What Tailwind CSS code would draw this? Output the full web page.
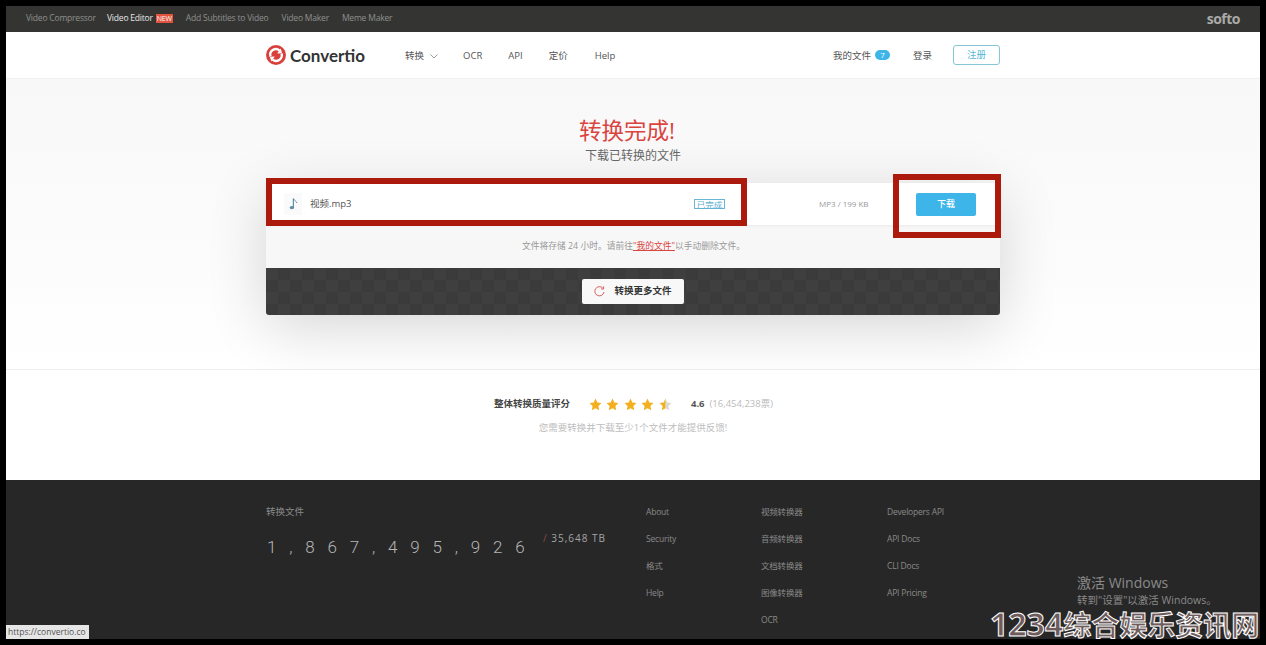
<!DOCTYPE html>
<html lang="zh">
<head>
<meta charset="utf-8">
<script src="https://cdn.jsdelivr.net/npm/@tailwindcss/browser@4"></script>
<title>Convertio</title>
</head>
<body class="bg-black">
<div class="relative w-[1266px] h-[645px] overflow-hidden bg-black pt-[6px] pl-[6px] pr-[6px] font-['Open_Sans','Noto_Sans_CJK_SC',sans-serif]">
  <div class="flex flex-col w-[1254px] h-[633px]">
    <!-- softo bar -->
    <div class="flex items-center justify-between h-[26px] shrink-0 bg-[#343533] pl-[20px] pr-[20px] pb-[2px] text-[8.500px] tracking-[-0.200px] text-[#8f8f8d]">
      <div class="flex items-center">
        <span class="w-[81px]">Video Compressor</span>
        <span class="text-[#e6e6e6]">Video Editor</span>
        <span class="ml-[3px] bg-[#e2543d] text-white text-[7px] leading-[9px] px-[1px]">NEW</span>
        <span class="ml-[13px]">Add Subtitles to Video</span>
        <span class="ml-[13px]">Video Maker</span>
        <span class="ml-[13px]">Meme Maker</span>
      </div>
      <span class="text-[14px] font-bold text-[#a9a9a7] tracking-[-0.5px]">softo</span>
    </div>
    <!-- header -->
    <div class="h-[47px] shrink-0 bg-white border-b border-[#f0f0f0]">
      <div class="w-[734px] mx-auto h-full flex items-center justify-between text-[9.500px] text-[#555]">
        <div class="flex items-center">
          <svg class="w-[20px] h-[20px]" viewBox="0 0 20 20">
            <circle cx="10" cy="10" r="10" fill="#d8403c"/>
            <path d="M4.500 11.500A5.600 5.600 0 0 1 13.600 5.600" fill="none" stroke="#fff" stroke-width="2.400"/>
            <path d="M15.500 8.500A5.600 5.600 0 0 1 6.400 14.400" fill="none" stroke="#fff" stroke-width="2.400"/>
            <path d="M11.200 8.400 16 8.200 14.800 3.600Z M8.800 11.600 4 11.800 5.200 16.400Z" fill="#fff"/>
          </svg>
          <span class="ml-[4px] w-[115px] text-[17px] leading-none font-bold text-[#333] font-['Lato',sans-serif]">Convertio</span>
          <span class="pt-[2px]">转换</span>
          <svg class="ml-[6px] mt-[2px] w-[8px] h-[5px]" viewBox="0 0 8 5"><path d="M.5.5 4 4 7.500.5" fill="none" stroke="#999"/></svg>
          <span class="ml-[25px] pt-[2px]">OCR</span>
          <span class="ml-[26px] pt-[2px]">API</span>
          <span class="ml-[26px] pt-[2px]">定价</span>
          <span class="ml-[27px] pt-[2px]">Help</span>
        </div>
        <div class="flex items-center">
          <span class="pt-[2px]">我的文件</span>
          <span class="ml-[4px] w-[15px] h-[10px] rounded-full bg-[#3db5e8] text-white text-[8px] leading-[10px] text-center">7</span>
          <span class="ml-[23px] pt-[2px]">登录</span>
          <span class="ml-[21px] w-[47px] h-[20px] flex items-center justify-center rounded-[3px] border border-[#86c6d6] text-[#5bb8d6]">注册</span>
        </div>
      </div>
    </div>
    <!-- main -->
    <div class="h-[291px] shrink-0 bg-gradient-to-b from-[#f8f8f8] via-[#fbfbfb] to-white pt-[40px] border-b border-[#eeeeee]">
      <div class="h-[23px] leading-[23px] text-center text-[22.500px] text-[#d9443f] pr-[12px]">转换完成!</div>
      <div class="mt-[5px] h-[18px] leading-[18px] text-center text-[12px] text-[#666]">下载已转换的文件</div>
      <div class="mt-[18px] w-[734px] mx-auto rounded-b-[3px] shadow-[0_12px_60px_rgba(0,0,0,0.16)]">
        <div class="h-[42px] bg-white flex items-center shadow-[0_1px_3px_rgba(0,0,0,0.06)] relative">
          <div class="ml-[18px] w-[18px] h-[22px] bg-[#fafafa] flex items-center justify-center">
            <svg class="w-[9px] h-[12px]" viewBox="0 0 9 12"><path d="M4.400 0.500V9" stroke="#5f8fa8" stroke-width="1.200"/><ellipse cx="2.900" cy="9.600" rx="2.300" ry="1.700" fill="#5f8fa8"/><path d="M4.600 .8C5.200 2.600 7.400 3 8 5" stroke="#5f8fa8" fill="none"/></svg>
          </div>
          <span class="ml-[8px] w-[42px] text-[9.500px] text-[#555]">视频.mp3</span>
          <span class="ml-[342px] w-[31px] h-[10px] leading-[9px] text-center border border-[#68b7d4] text-[8.500px] text-[#58add0]">已完成</span>
          <span class="ml-[94px] w-[50px] whitespace-nowrap text-[8px] text-[#999]">MP3 / 199 KB</span>
          <span class="ml-[47px] w-[60px] h-[23px] flex items-center justify-center rounded-[2px] bg-[#3db5e8] text-white text-[9px] font-medium">下载</span>
        </div>
        <div class="h-[43px] bg-[#f7f7f7] flex items-center justify-center text-[8.750px] text-[#999] pl-[1px]">
          <span>文件将存储 24 小时。请前往<span class="text-[#d9443f] underline">"我的文件"</span>以手动删除文件。</span>
        </div>
        <div class="h-[47px] rounded-b-[3px] flex items-center justify-center bg-[#3c3c3c] bg-[repeating-conic-gradient(#3b3b3b_0_25%,#3f3f3f_0_50%)] bg-[length:24px_24px]">
          <span class="w-[102px] h-[25px] rounded-[2px] bg-[#f8f8f8] flex items-center justify-center text-[9.500px] font-semibold text-[#333]">
            <svg class="w-[11px] h-[11px] mr-[9px]" viewBox="0 0 11 11"><path d="M8.900 2.200A4.600 4.600 0 1 0 10 6" fill="none" stroke="#d9605c" stroke-width="1"/><path d="M9.600 .4V3H7" fill="none" stroke="#d9605c" stroke-width="1"/></svg>
            转换更多文件
          </span>
        </div>
      </div>
    </div>
    <!-- rating -->
    <div class="h-[110px] shrink-0 bg-white pt-[25px]">
      <div class="flex items-center justify-center h-[18px] text-[9.500px] pl-[1px]">
        <span class="font-bold text-[#444]">整体转换质量评分</span>
        <div class="ml-[19px] flex items-center gap-[4.500px]">
          <svg class="w-[13px] h-[13px]" viewBox="0 0 24 24"><path fill="#f2b01e" d="M12 1l3.400 7.200 7.600 1-5.600 5.400 1.400 7.900L12 18.700 5.200 22.500l1.400-7.900L1 9.200l7.600-1z"/></svg>
          <svg class="w-[13px] h-[13px]" viewBox="0 0 24 24"><path fill="#f2b01e" d="M12 1l3.400 7.200 7.600 1-5.600 5.400 1.400 7.900L12 18.700 5.200 22.500l1.400-7.900L1 9.200l7.600-1z"/></svg>
          <svg class="w-[13px] h-[13px]" viewBox="0 0 24 24"><path fill="#f2b01e" d="M12 1l3.400 7.200 7.600 1-5.600 5.400 1.400 7.900L12 18.700 5.200 22.500l1.400-7.900L1 9.200l7.600-1z"/></svg>
          <svg class="w-[13px] h-[13px]" viewBox="0 0 24 24"><path fill="#f2b01e" d="M12 1l3.400 7.200 7.600 1-5.600 5.400 1.400 7.900L12 18.700 5.200 22.500l1.400-7.900L1 9.200l7.600-1z"/></svg>
          <svg class="w-[13px] h-[13px]" viewBox="0 0 24 24"><path fill="#d9d9d9" d="M12 1l3.400 7.200 7.600 1-5.600 5.400 1.400 7.900L12 18.700z"/><path fill="#f2b01e" d="M12 1v17.700L5.200 22.500l1.400-7.900L1 9.200l7.600-1z"/></svg>
        </div>
        <span class="ml-[19px] font-bold text-[#555]">4.6</span>
        <span class="ml-[5px] text-[#bbb]">(16,454,238票)</span>
      </div>
      <div class="mt-[8px] text-center text-[9.500px] text-[#bdbdbd]">您需要转换并下载至少1个文件才能提供反馈!</div>
    </div>
    <!-- footer -->
    <div class="flex-1 bg-[#272727] text-[8.500px] tracking-[-0.200px] text-[#8a8a8a]">
      <div class="w-[734px] mx-auto flex pt-[26px]">
        <div class="w-[380px] tracking-normal">
          <div class="text-[9.500px] leading-[13px] -mt-[1px]">转换文件</div>
          <div class="flex mt-[13px]">
            <span class="mt-[5px] text-[17px] leading-[22px] tracking-[12.800px] text-[#b5b5b5] font-light font-['Roboto',sans-serif] w-[277px] pl-[1px] whitespace-nowrap">1,867,495,926</span>
            <span class="text-[10px] leading-[14px] tracking-[1px] text-[#a5a5a5]"><span class="text-[#8c4a4a]">/</span> 35,648 TB</span>
          </div>
        </div>
        <div class="w-[115px] flex flex-col gap-[15px] leading-[12px]">
          <span>About</span><span>Security</span><span>格式</span><span>Help</span>
        </div>
        <div class="w-[126px] flex flex-col gap-[15px] leading-[12px]">
          <span>视频转换器</span><span>音频转换器</span><span>文档转换器</span><span>图像转换器</span><span>OCR</span>
        </div>
        <div class="flex flex-col gap-[15px] leading-[12px]">
          <span>Developers API</span><span>API Docs</span><span>CLI Docs</span><span>API Pricing</span>
        </div>
      </div>
    </div>
  </div>

  <!-- annotation boxes -->
  <div class="absolute left-[266px] top-[178px] w-[481px] h-[48px] border-[6px] border-[#ab1a0d]"></div>
  <div class="absolute left-[893px] top-[174px] w-[108px] h-[64px] border-[6px] border-[#ab1a0d]"></div>

  <!-- browser status tooltip -->
  <div class="absolute left-[6px] top-[625px] w-[83px] h-[14px] bg-[#e6e6e6] text-[8.500px] leading-[14px] pl-[2px] text-[#555]">https://convertio.co</div>

  <!-- Windows activation -->
  <div class="absolute left-[1077px] top-[574px] text-[14px] leading-[18px] text-[#8a8a8a]">激活 Windows</div>
  <div class="absolute left-[1077px] top-[593px] text-[10.500px] leading-[14px] text-[#8a8a8a]">转到"设置"以激活 Windows。</div>

  <!-- watermark -->
  <div class="absolute left-[990px] top-[608px] whitespace-nowrap text-[28px] leading-[30px] font-bold text-[#6e5c5c] [-webkit-text-stroke:1px_#ffffff]"><span class="text-[32px] leading-none">1234</span>综合娱乐资讯网</div>
</div>
</body>
</html>
